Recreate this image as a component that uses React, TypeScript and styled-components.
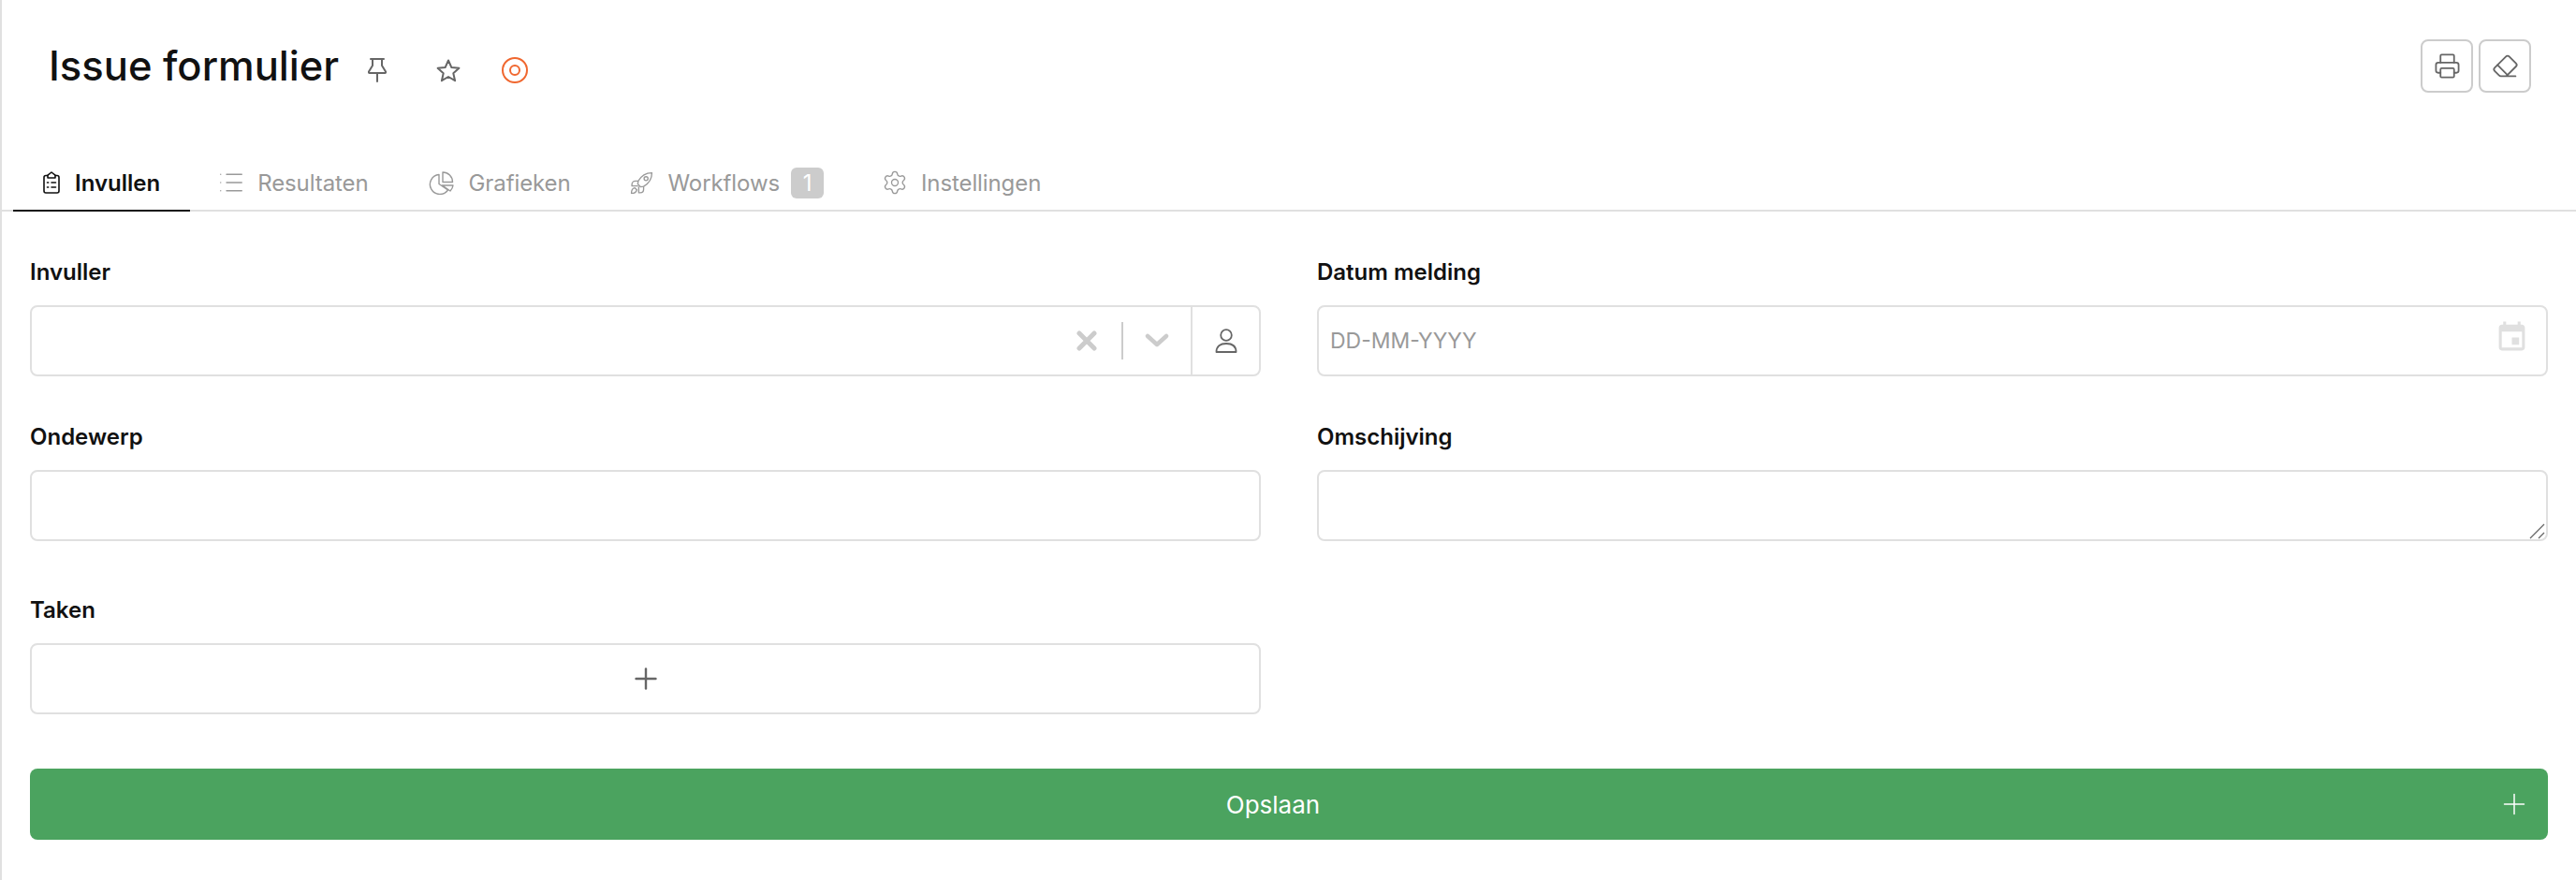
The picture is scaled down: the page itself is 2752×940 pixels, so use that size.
import { ReactNode } from "react";
import styled, { createGlobalStyle } from "styled-components";
import { Eraser, List, Plus, Printer, Settings } from "lucide-react";

const GlobalStyle = createGlobalStyle`
  html, body {
    margin: 0;
    padding: 0;
    background: #fff;
    font-family: Inter, "Liberation Sans", sans-serif;
  }
  * {
    box-sizing: border-box;
  }
`;

const Page = styled.div`
  width: 2752px;
  height: 940px;
  border-left: 2px solid #e0e0e0;
  overflow: hidden;
`;

const Header = styled.header`
  display: flex;
  align-items: flex-start;
  justify-content: space-between;
  height: 166px;
  padding: 44px 48px 0 50px;
`;

const TitleRow = styled.div`
  display: flex;
  align-items: center;
`;

const Title = styled.h1`
  margin: 0 31px 0 0;
  font-size: 43.5px;
  line-height: 52px;
  font-weight: 500;
  color: #111;
`;

const TitleIcon = styled.span<{ $color?: string; $gap?: number }>`
  display: flex;
  margin-right: ${(p) => p.$gap ?? 0}px;
  margin-top: 10px;
  color: ${(p) => p.$color ?? "#666"};
`;

const HeaderActions = styled.div`
  display: flex;
  gap: 6px;
  margin-top: -2px;
`;

const SquareButton = styled.button`
  display: flex;
  align-items: center;
  justify-content: center;
  width: 56px;
  height: 57px;
  padding: 0;
  background: #fff;
  border: 2px solid #ccc;
  border-radius: 8px;
  color: #666;
`;

const TabBar = styled.nav`
  display: flex;
  height: 60px;
  padding-left: 12px;
  border-bottom: 2px solid #e0e0e0;
`;

const Tab = styled.div<{ $active?: boolean }>`
  display: flex;
  align-items: center;
  gap: 16px;
  height: 60px;
  padding: 0 32px;
  font-size: 24px;
  font-weight: ${(p) => (p.$active ? 600 : 400)};
  letter-spacing: ${(p) => (p.$active ? "0" : "-0.1px")};
  color: ${(p) => (p.$active ? "#111" : "#999")};
  border-bottom: 2px solid ${(p) => (p.$active ? "#111" : "transparent")};
`;

const TabIcon = styled.span<{ $width: number }>`
  display: flex;
  justify-content: center;
  width: ${(p) => p.$width}px;

  svg {
    flex-shrink: 0;
  }
`;

const Count = styled.span`
  display: flex;
  align-items: center;
  justify-content: center;
  width: 35px;
  height: 33px;
  margin-left: -4px;
  border-radius: 6px;
  background: #ccc;
  color: #fff;
  font-size: 24px;
`;

const Form = styled.form`
  display: grid;
  grid-template-columns: 1fr 1fr;
  column-gap: 60px;
  row-gap: 53px;
  padding: 53px 30px 0;
`;

const Field = styled.div<{ $top?: number }>`
  display: flex;
  flex-direction: column;
  gap: 24px;
  padding-top: ${(p) => p.$top ?? 0}px;
`;

const Label = styled.label`
  font-size: 24px;
  line-height: 23px;
  font-weight: 600;
  color: #111;
`;

const boxStyles = `
  width: 100%;
  height: 76px;
  background: #fff;
  border: 2px solid #e0e0e0;
  border-radius: 8px;
`;

const Input = styled.input`
  ${boxStyles}
  padding: 0 12px;
  font-family: inherit;
  font-size: 23px;
  outline: none;
  &::placeholder {
    color: #999;
  }
`;

const TextAreaWrap = styled.div`
  position: relative;
`;

const TextArea = styled.textarea`
  ${boxStyles}
  display: block;
  padding: 12px;
  font-family: inherit;
  font-size: 24px;
  outline: none;
  resize: none;
`;

const ResizeGrip = styled.svg`
  position: absolute;
  right: 2px;
  bottom: 2px;
  width: 18px;
  height: 18px;
  stroke: #666;
  stroke-width: 1.3;
  pointer-events: none;
`;

const Box = styled.div`
  ${boxStyles}
  display: flex;
  align-items: center;
`;

const SelectSpacer = styled.div`
  flex: 1;
`;

const SelectControl = styled.span<{ $width: number }>`
  display: flex;
  align-items: center;
  justify-content: center;
  width: ${(p) => p.$width}px;
  color: #ccc;
`;

const SelectDivider = styled.span`
  width: 2px;
  height: 40px;
  background: #ccc;
`;

const SelectAddon = styled.span`
  display: flex;
  align-items: center;
  justify-content: center;
  width: 73px;
  height: 100%;
  border-left: 2px solid #e0e0e0;
  color: #666;
`;

const DateBox = styled.div`
  position: relative;
`;

const DateIcon = styled.svg`
  position: absolute;
  top: 16px;
  right: 20px;
  width: 37px;
  height: 37px;
  fill: #e0e0e0;
`;

const AddButton = styled.button`
  ${boxStyles}
  display: flex;
  align-items: center;
  justify-content: center;
  padding: 0;
  color: #666;
`;

const SaveButton = styled.button`
  position: relative;
  grid-column: 1 / -1;
  display: flex;
  align-items: center;
  justify-content: center;
  height: 76px;
  margin-top: 5px;
  padding: 0 34px 0 0;
  background: #4ba35f;
  border: none;
  border-radius: 8px;
  color: #fff;
  font-family: inherit;
  font-size: 26px;
`;

const SaveIcon = styled.span`
  position: absolute;
  right: 18px;
  top: 20px;
  display: flex;
`;

const ClipboardIcon = () => (
  <svg width="18" height="24" viewBox="0 0 18 24" fill="none" stroke="currentColor" strokeWidth="1.6" strokeLinecap="round" strokeLinejoin="round">
    <path d="M5 4.5H3a2 2 0 0 0-2 2V21a2 2 0 0 0 2 2h12a2 2 0 0 0 2-2V6.5a2 2 0 0 0-2-2h-2" />
    <path d="M5 7V4.2L9 1l4 3.2V7z" />
    <path d="M4.5 12h1.2M9 12h4.5M4.5 17h1.2M9 17h4.5" />
  </svg>
);

const PieIcon = () => (
  <svg width="27" height="25" viewBox="0 0 27 25" fill="none" stroke="currentColor" strokeWidth="1.4" strokeLinejoin="round">
    <path d="M11 3.5A10.5 10.5 0 1 0 20.5 20L11 13.5z" />
    <path d="M15 1a10.5 10.5 0 0 1 10.5 10.5H15z" />
    <path d="M14.5 15H26a10.5 10.5 0 0 1-3 6z" />
  </svg>
);

const RocketIcon = () => (
  <svg width="25" height="25" viewBox="0 0 24 24" fill="none" stroke="currentColor" strokeWidth="1.3" strokeLinejoin="round">
    <path d="M22.5 1.5c-6.5 0-11 3-14 8.500l-.5 3 3 3 3-.5c5.500-3 8.500-7.500 8.500-14z" />
    <circle cx="16.500" cy="7.500" r="2" />
    <path d="M8.500 10H5.500C3.500 10 2 11.500 2 13.500V15h6.300" />
    <path d="M14 15.500V18.500C14 20.500 12.500 22 10.500 22H9V15.700" />
    <path d="M1.500 22.500c0-3 1-5 3.500-5.500l2 2c-.5 2.500-2.500 3.500-5.500 3.500z" />
  </svg>
);

const PinIcon = () => (
  <svg width="20" height="26" viewBox="0 0 20 26" fill="none" stroke="currentColor" strokeWidth="2" strokeLinecap="round" strokeLinejoin="round">
    <path d="M3 1h14M5 1v7l-4 6.500c-.3.6 0 1.500.8 1.500h16.400c.8 0 1.100-.9.800-1.500L15 8V1M10 16v9" />
  </svg>
);

const StarIcon = () => (
  <svg width="26" height="25" viewBox="0 0 26 25" fill="none" stroke="currentColor" strokeWidth="2" strokeLinejoin="round">
    <path d="M13 1.500l3.400 7.600 8 .7-6.100 5.400 1.800 8-7.100-4.200-7.100 4.200 1.800-8L1.600 9.800l8-.7z" />
  </svg>
);

const TargetIcon = () => (
  <svg width="28" height="28" viewBox="0 0 28 28" fill="none" stroke="currentColor" strokeWidth="2">
    <circle cx="14" cy="14" r="13" />
    <circle cx="14" cy="14" r="5" />
  </svg>
);

const UserIcon = () => (
  <svg width="24" height="26" viewBox="0 0 24 26" fill="none" stroke="currentColor" strokeWidth="1.8" strokeLinejoin="round">
    <circle cx="12" cy="7" r="5.800" />
    <path d="M1.500 25c0-6 4-9 10.500-9s10.500 3 10.500 9z" />
  </svg>
);

const ClearIcon = () => (
  <svg width="22" height="22" viewBox="0 0 22 22" fill="none" stroke="currentColor" strokeWidth="5" strokeLinecap="round">
    <path d="M3 3l16 16M19 3L3 19" />
  </svg>
);

const ChevronIcon = () => (
  <svg width="26" height="16" viewBox="0 0 26 16" fill="none" stroke="currentColor" strokeWidth="4.500" strokeLinecap="round" strokeLinejoin="round">
    <path d="M3 3l10 9 10-9" />
  </svg>
);

type TabItem = { label: string; icon: ReactNode; width: number; count?: number; active?: boolean };

const tabs: TabItem[] = [
  { label: "Invullen", icon: <ClipboardIcon />, width: 18, active: true },
  { label: "Resultaten", icon: <List size={30} strokeWidth={1.1} />, width: 24 },
  { label: "Grafieken", icon: <PieIcon />, width: 27 },
  { label: "Workflows", icon: <RocketIcon />, width: 24, count: 1 },
  { label: "Instellingen", icon: <Settings size={28} strokeWidth={1.15} />, width: 24 },
];

export default function App() {
  return (
    <Page>
      <GlobalStyle />
      <Header>
        <TitleRow>
          <Title>Issue formulier</Title>
          <TitleIcon $gap={53}>
            <PinIcon />
          </TitleIcon>
          <TitleIcon $gap={44}>
            <StarIcon />
          </TitleIcon>
          <TitleIcon $color="#f0672f">
            <TargetIcon />
          </TitleIcon>
        </TitleRow>
        <HeaderActions>
          <SquareButton aria-label="Afdrukken">
            <Printer size={29} strokeWidth={1.5} />
          </SquareButton>
          <SquareButton aria-label="Wissen">
            <Eraser size={29} strokeWidth={1.5} />
          </SquareButton>
        </HeaderActions>
      </Header>

      <TabBar>
        {tabs.map((t) => (
          <Tab key={t.label} $active={t.active}>
            <TabIcon $width={t.width}>{t.icon}</TabIcon>
            {t.label}
            {t.count !== undefined && <Count>{t.count}</Count>}
          </Tab>
        ))}
      </TabBar>

      <Form>
        <Field>
          <Label>Invuller</Label>
          <Box>
            <SelectSpacer />
            <SelectControl $width={74}>
              <ClearIcon />
            </SelectControl>
            <SelectDivider />
            <SelectControl $width={72}>
              <ChevronIcon />
            </SelectControl>
            <SelectAddon>
              <UserIcon />
            </SelectAddon>
          </Box>
        </Field>

        <Field>
          <Label>Datum melding</Label>
          <DateBox>
            <Input placeholder="DD-MM-YYYY" />
            <DateIcon viewBox="0 0 24 24">
              <path d="M19 3h-1V1h-2v2H8V1H6v2H5c-1.110 0-2 .9-2 2v14c0 1.100.89 2 2 2h14c1.100 0 2-.9 2-2V5c0-1.100-.9-2-2-2zm0 16H5V8h14v11zm-2-7h-5v5h5v-5z" />
            </DateIcon>
          </DateBox>
        </Field>

        <Field>
          <Label>Ondewerp</Label>
          <Input />
        </Field>

        <Field>
          <Label>Omschijving</Label>
          <TextAreaWrap>
            <TextArea />
            <ResizeGrip viewBox="0 0 18 18">
              <path d="M1 17L16 2M10 17l6-6" />
            </ResizeGrip>
          </TextAreaWrap>
        </Field>

        <Field $top={9}>
          <Label>Taken</Label>
          <AddButton type="button" aria-label="Taak toevoegen">
            <Plus size={36} strokeWidth={1.6} />
          </AddButton>
        </Field>
        <div />

        <SaveButton type="button">
          Opslaan
          <SaveIcon>
            <Plus size={36} strokeWidth={1} />
          </SaveIcon>
        </SaveButton>
      </Form>
    </Page>
  );
}
